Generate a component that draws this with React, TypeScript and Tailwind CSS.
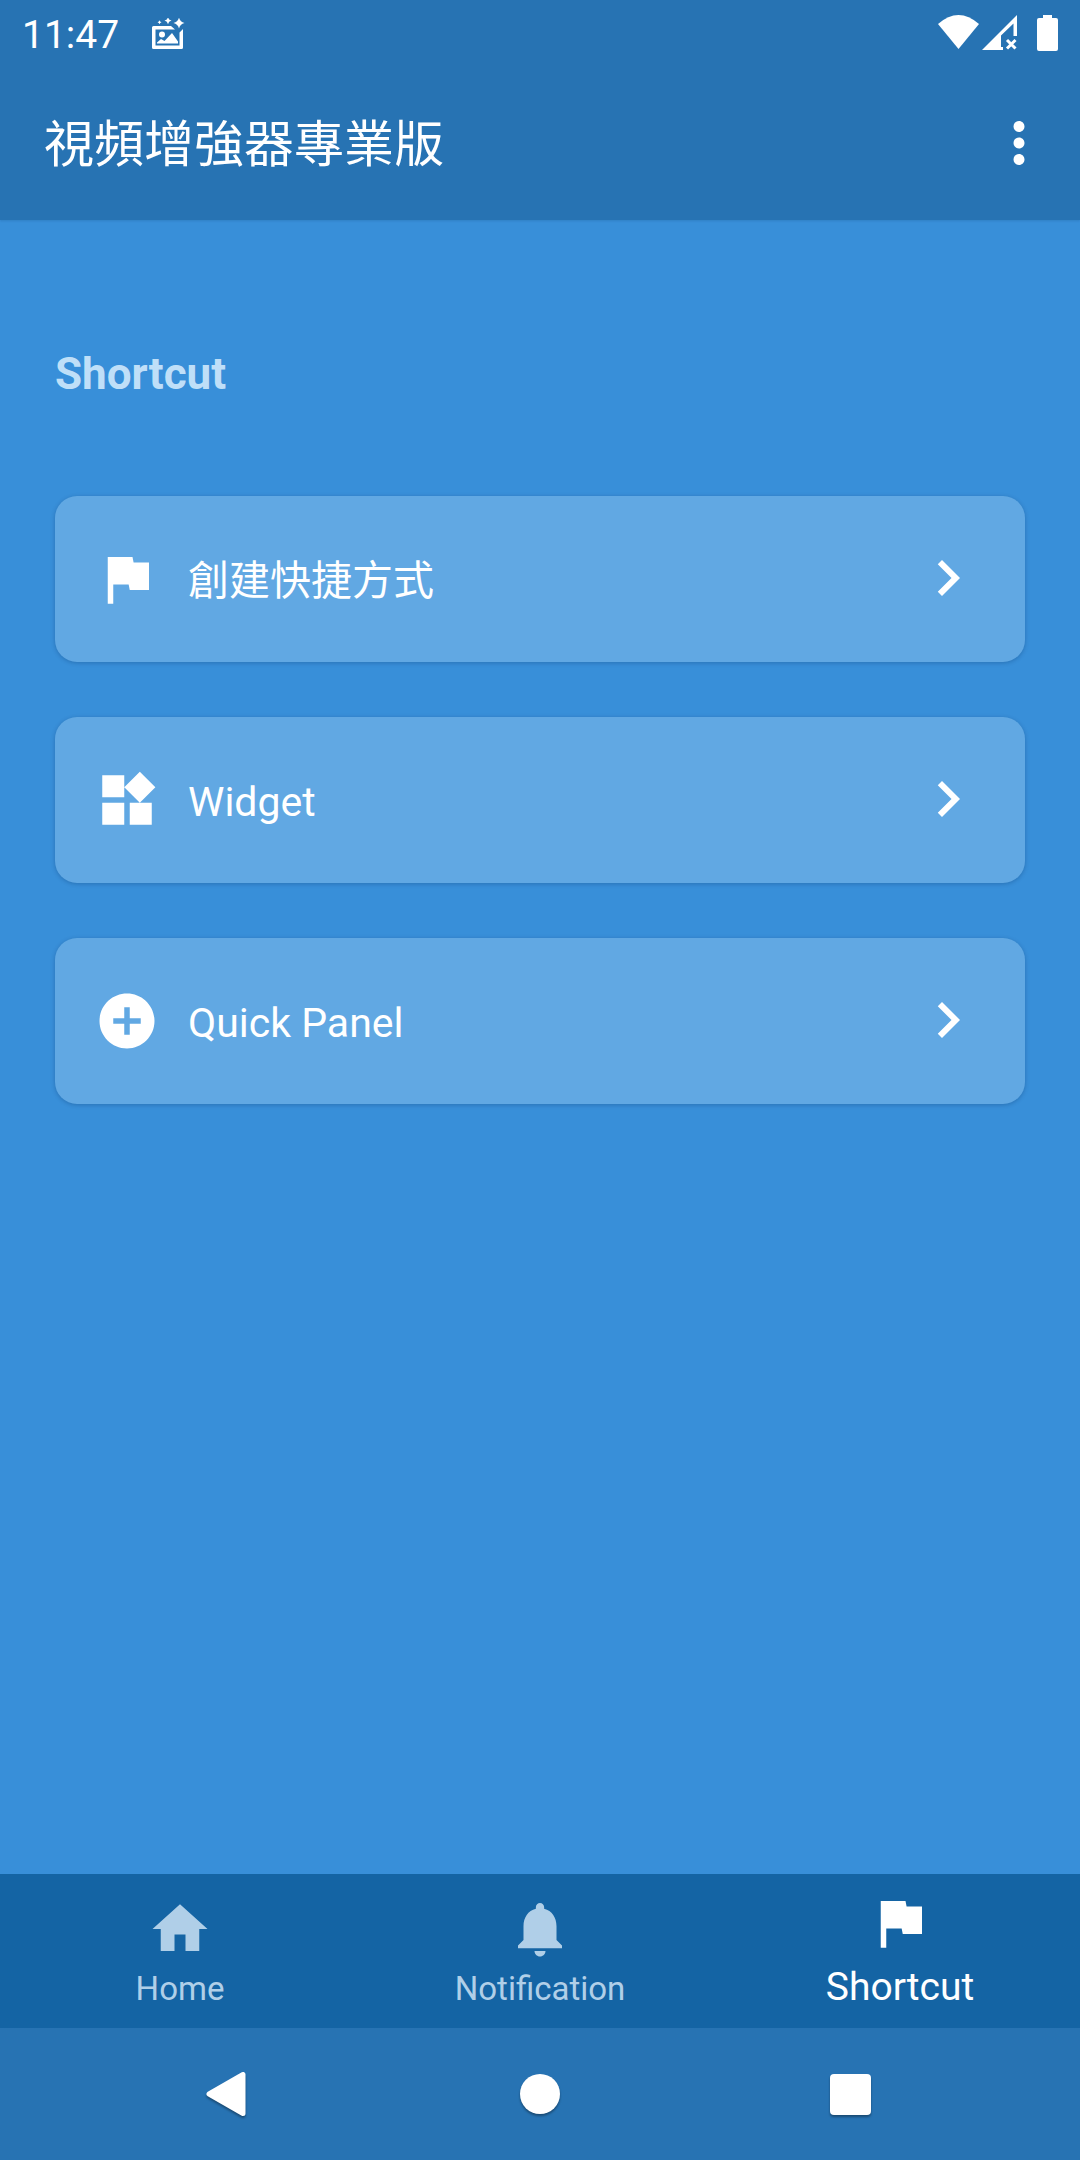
import type { ReactNode } from "react";

function Icon({ path, className }: { path: string; className: string }) {
  return (
    <svg viewBox="0 0 24 24" fill="currentColor" aria-hidden="true" className={className}>
      <path d={path} />
    </svg>
  );
}

const FLAG = "M14.4 6L14 4H5v17h2v-7h5.6l.4 2h7V6z";
const WIDGETS =
  "M13 13v8h8v-8h-8zM3 21h8v-8H3v8zM3 3v8h8V3H3zm13.66-1.31L11 7.34 16.66 13l5.66-5.66-5.66-5.65z";
const ADD_CIRCLE =
  "M12 2C6.48 2 2 6.48 2 12s4.48 10 10 10 10-4.48 10-10S17.52 2 12 2zm5 11h-4v4h-2v-4H7v-2h4V7h2v4h4v2z";
const CHEVRON = "M10 6L8.59 7.41 13.17 12l-4.58 4.59L10 18l6-6z";
const MORE =
  "M12 8c1.1 0 2-.9 2-2s-.9-2-2-2-2 .9-2 2 .9 2 2 2zm0 2c-1.1 0-2 .9-2 2s.9 2 2 2 2-.9 2-2-.9-2-2-2zm0 6c-1.1 0-2 .9-2 2s.9 2 2 2 2-.9 2-2-.9-2-2-2z";
const HOME = "M10 20v-6h4v6h5v-8h3L12 3 2 12h3v8z";
const BELL =
  "M12 22c1.1 0 2-.9 2-2h-4c0 1.1.9 2 2 2zm6-6v-5c0-3.07-1.64-5.64-4.5-6.32V4c0-.83-.67-1.5-1.5-1.5s-1.5.67-1.5 1.5v.68C7.63 5.36 6 7.92 6 11v5l-2 2v1h16v-1l-2-2z";

function StatusBar() {
  return (
    <div className="flex h-[66px] items-center justify-between px-[22px]">
      <div className="flex items-center pt-[3px]">
        <span className="text-[39px] leading-[46px]">11:47</span>
        <svg viewBox="0 2 34 34" fill="currentColor" aria-hidden="true" className="ml-8 size-[34px]">
          <path d="M2.500 10H20l4 3.500H4.500V29.500H28.500V16.500L32 13V31.500q0 1.500-1.500 1.500h-28Q1 33 1 31.500v-20Q1 10 2.500 10z" />
          <circle cx="11" cy="18.500" r="3" />
          <path d="M6 27.500v-1l4-3.500 3.500 2 7.500-8 6 8.500v2z" />
          <path d="M28 1.500q1 4.500 5.500 5.500-4.500 1-5.500 5.500-1-4.500-5.500-5.500 4.500-1 5.500-5.500zM17 1q.6 3 3.500 3.600-2.900.6-3.500 3.600-.6-3-3.500-3.600Q16.400 4 17 1zM8.500 4.200q.3 1.700 2 2-1.700.3-2 2-.3-1.700-2-2 1.700-.3 2-2z" />
        </svg>
      </div>
      <svg viewBox="0 0 120 36" fill="currentColor" aria-hidden="true" className="h-[36px] w-[120px]">
        <path d="M0 9Q20.500-9 41 9L20.500 34z" />
        <path d="M44 35L79 0V21H75.500V8.500L63 20.500V32H65V35z" />
        <path d="M69 25l8.500 8.500M77.500 25l-8.500 8.500" stroke="currentColor" strokeWidth="3" />
        <path d="M105 0h9v3h4q2 0 2 2v29q0 2-2 2h-17q-2 0-2-2V5q0-2 2-2h4z" />
      </svg>
    </div>
  );
}

function ShortcutRow({ icon, label }: { icon: string; label: string }) {
  return (
    <li>
      <button
        type="button"
        className="flex h-[166px] w-full items-center rounded-[22px] bg-[#61a8e3] pr-[41px] pl-[39px] text-left shadow-[0_1px_4px_rgba(0,40,90,0.28)]"
      >
        <Icon path={icon} className="size-[66px]" />
        <span className="ml-7 flex-1 pt-1 text-[41px] leading-[48px]">{label}</span>
        <Icon path={CHEVRON} className="mb-0.5 size-[72px]" />
      </button>
    </li>
  );
}

function Tab({ icon, label, active = false }: { icon: string; label: string; active?: boolean }) {
  return (
    <a
      href="#"
      aria-current={active ? "page" : undefined}
      className={
        active
          ? "flex h-[154px] flex-1 flex-col items-center justify-between pt-4 pb-[18px] text-[39px] leading-[46px] text-white"
          : "flex h-[154px] flex-1 flex-col items-center justify-between pt-[22px] pb-5 text-[33px] leading-[38px] text-[#b0cfe8]"
      }
    >
      <Icon path={icon} className="size-[66px]" />
      <span>{label}</span>
    </a>
  );
}

function NavButton({ label, children }: { label: string; children: ReactNode }) {
  return (
    <button type="button" aria-label={label} className="flex h-[132px] w-[312px] items-center justify-center">
      <svg
        viewBox="0 0 48 48"
        fill="currentColor"
        aria-hidden="true"
        className="size-12 drop-shadow-[0_2px_1px_rgba(0,0,0,0.35)]"
      >
        {children}
      </svg>
    </button>
  );
}

export default function App() {
  return (
    <div className="flex min-h-screen flex-col bg-[#388fd9] font-[Roboto,'Noto_Sans_CJK_TC',sans-serif] text-white">
      <header className="bg-[#2773b3] shadow-[0_1px_2px_rgba(0,40,90,0.15)]">
        <StatusBar />
        <div className="flex h-[154px] items-center justify-between pr-7 pl-11">
          <h1 className="pt-[3px] text-[50px] leading-[60px]">視頻增強器專業版</h1>
          <button type="button" aria-label="More options">
            <Icon path={MORE} className="size-[66px]" />
          </button>
        </div>
      </header>

      <main className="flex-1 px-[55px] pt-[128px]">
        <h2 className="text-[44px] leading-[52px] font-bold text-[#bfdff8]">Shortcut</h2>
        <ul className="mt-24 flex flex-col gap-[55px]">
          <ShortcutRow icon={FLAG} label="創建快捷方式" />
          <ShortcutRow icon={WIDGETS} label="Widget" />
          <ShortcutRow icon={ADD_CIRCLE} label="Quick Panel" />
        </ul>
      </main>

      <nav aria-label="Sections" className="flex bg-[#1464a4]">
        <Tab icon={HOME} label="Home" />
        <Tab icon={BELL} label="Notification" />
        <Tab icon={FLAG} label="Shortcut" active />
      </nav>

      <div className="flex justify-center bg-[#2773b3]">
        <NavButton label="Back">
          <path d="M5 24L39 4.500V43.500z" stroke="currentColor" strokeWidth="5" strokeLinejoin="round" />
        </NavButton>
        <NavButton label="Home screen">
          <circle cx="24" cy="24" r="20" />
        </NavButton>
        <NavButton label="Recent apps">
          <rect x="2" y="4" width="41" height="41" rx="4" />
        </NavButton>
      </div>
    </div>
  );
}
